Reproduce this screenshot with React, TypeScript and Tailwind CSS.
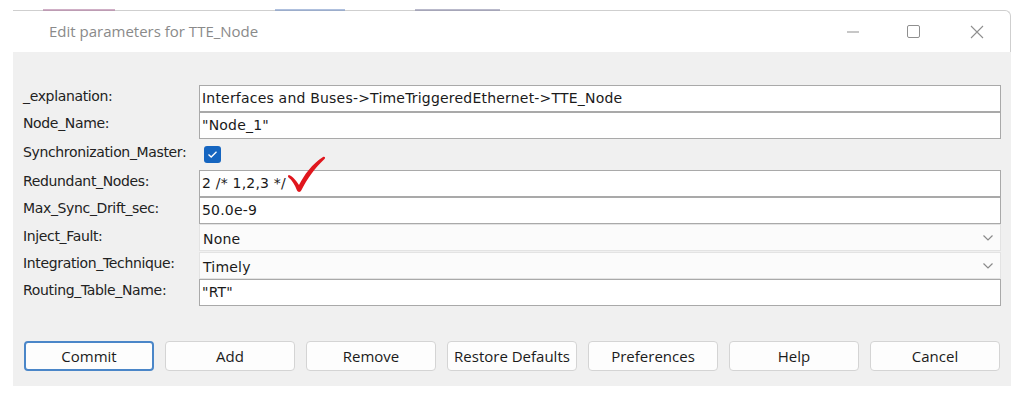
import React from "react";

const labelFont = { fontFamily: '"DejaVu Sans", "Liberation Sans", sans-serif' };

function TextField({ value, children }: { value: string; children?: React.ReactNode }) {
  return (
    <div className="relative flex h-[27px] items-center border border-[#a9a9a9] bg-white pl-[2px] text-[14px] text-[#1a1a1a] tracking-[0.2px]">
      <span>{value}</span>
      {children}
    </div>
  );
}

function SelectField({ value }: { value: string }) {
  return (
    <div className="flex h-[27px] items-center justify-between border border-[#e3e3e3] bg-[#fbfbfb] pl-[3px] pr-[6px] text-[14px] text-[#1a1a1a] tracking-[0.2px]">
      <span className="pt-[3px]">{value}</span>
      <svg width="12" height="8" viewBox="0 0 12 8" fill="none">
        <path d="M1.5 1.5 L6 6 L10.5 1.5" stroke="#8a8a8a" strokeWidth="1.2" />
      </svg>
    </div>
  );
}

function Btn({ label, primary }: { label: string; primary?: boolean }) {
  return (
    <div
      className={
        "flex h-[30px] w-[130px] items-center justify-center rounded-[4px] bg-[#fdfdfd] text-[15px] text-[#1b1b1b] " +
        (primary ? "border-2 border-[#4a86c8]" : "border border-[#d4d4d4]")
      }
      style={{ fontFamily: '"Open Sans", "Noto Sans", sans-serif' }}
    >
      {label}
    </div>
  );
}

export default function App() {
  const rows: { label: string; h: string; field: React.ReactNode }[] = [
    { label: "_explanation:", h: "h-[27px]", field: <TextField value="Interfaces and Buses->TimeTriggeredEthernet->TTE_Node" /> },
    { label: "Node_Name:", h: "h-[27px]", field: <TextField value={'"Node_1"'} /> },
    {
      label: "Synchronization_Master:",
      h: "h-[31px]",
      field: (
        <div className="flex h-[31px] items-center pl-[5px]">
          <div className="flex h-[17px] w-[17px] items-center justify-center rounded-[3px] bg-[#1565c0]">
            <svg width="11" height="9" viewBox="0 0 11 9" fill="none">
              <path d="M1.5 4.5 L4.2 7 L9.5 1.8" stroke="#ffffff" strokeWidth="1.3" />
            </svg>
          </div>
        </div>
      ),
    },
    {
      label: "Redundant_Nodes:",
      h: "h-[27px]",
      field: (
        <TextField value="2 /* 1,2,3 */">
          <svg className="absolute left-[86px] top-[-17px]" width="42" height="40" viewBox="0 0 42 40" fill="none">
            <path
              d="M3 21 C6 22 10 26 13 31 C18 21 26 10 37 3 C38.5 2 40 3.5 38.5 5 C29 14 21 25 15.5 36 C14.5 38.5 12 38.5 11 36.5 C9 31 6 26 2.5 23.5 C1.5 22.5 2 21 3 21 Z"
              fill="#e0161d"
            />
          </svg>
        </TextField>
      ),
    },
    { label: "Max_Sync_Drift_sec:", h: "h-[27px]", field: <TextField value="50.0e-9" /> },
    { label: "Inject_Fault:", h: "h-[28px]", field: <SelectField value="None" /> },
    { label: "Integration_Technique:", h: "h-[27px]", field: <SelectField value="Timely" /> },
    { label: "Routing_Table_Name:", h: "h-[27px]", field: <TextField value={'"RT"'} /> },
  ];

  return (
    <div className="h-[397px] w-[1024px] overflow-hidden bg-white pt-[10px]" style={labelFont}>
      <div className="relative ml-[13px] w-[998px]">
        <div className="absolute left-[30px] top-[-1px] h-[2px] w-[72px] bg-[#b07aa0] opacity-60" />
        <div className="absolute left-[262px] top-[-1px] h-[2px] w-[70px] bg-[#7a96c8] opacity-60" />
        <div className="absolute left-[402px] top-[-1px] h-[2px] w-[85px] bg-[#8a8aa8] opacity-60" />
        <div className="h-[42px] rounded-tr-[6px] border-t border-r border-[#cfcfcf] bg-white">
          <div className="flex h-full items-center justify-between pl-[36px]">
            <span className="text-[15px] text-[#8a8a8a]" style={{ fontFamily: '"Open Sans", "Noto Sans", sans-serif' }}>
              Edit parameters for TTE_Node
            </span>
            <div className="flex items-center">
              <div className="flex w-[61px] justify-center">
                <svg width="12" height="2" viewBox="0 0 12 2"><path d="M0 1 H12" stroke="#8f8f8f" strokeWidth="1" /></svg>
              </div>
              <div className="flex w-[61px] justify-center">
                <svg width="13" height="13" viewBox="0 0 13 13" fill="none"><rect x="0.5" y="0.5" width="12" height="12" rx="1.5" stroke="#8f8f8f" /></svg>
              </div>
              <div className="flex w-[66px] justify-center">
                <svg width="14" height="14" viewBox="0 0 14 14" fill="none"><path d="M1 1 L13 13 M13 1 L1 13" stroke="#8f8f8f" strokeWidth="1.1" /></svg>
              </div>
            </div>
          </div>
        </div>
        <div className="h-[334px] bg-[#f0f0f0] px-[10px] pt-[33px]">
          <div className="flex flex-col">
            {rows.map((r) => (
              <div key={r.label} className={"flex " + r.h}>
                <div className="flex w-[176px] items-center pb-[4px] text-[14px] text-[#222] tracking-[-0.35px]">{r.label}</div>
                <div className="flex-1">{r.field}</div>
              </div>
            ))}
          </div>
          <div className="mt-[35px] flex gap-[11px] pl-[1px]">
            <Btn label="Commit" primary />
            <Btn label="Add" />
            <Btn label="Remove" />
            <Btn label="Restore Defaults" />
            <Btn label="Preferences" />
            <Btn label="Help" />
            <Btn label="Cancel" />
          </div>
        </div>
      </div>
    </div>
  );
}
